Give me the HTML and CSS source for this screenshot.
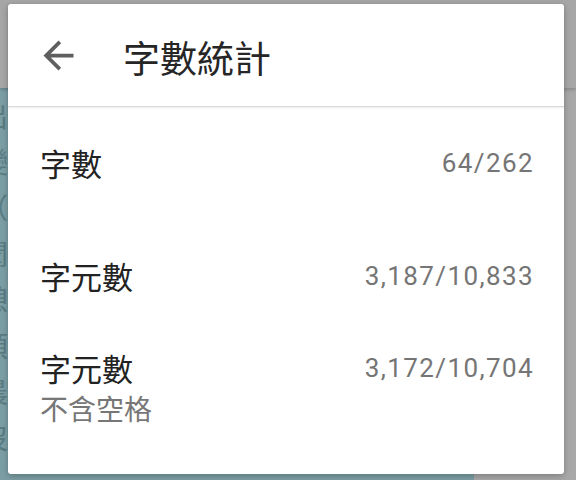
FILE: index.html
```html
<!DOCTYPE html>
<html lang="zh-Hant">
<head>
<meta charset="utf-8">
<link rel="stylesheet" href="styles.css">
</head>
<body>
<div class="app">
  <div class="app-bar"></div>
  <div class="app-body">
    <div class="page">
      <p>出</p>
      <p>變</p>
      <p>（</p>
      <p>聞</p>
      <p>憩</p>
      <p>顛</p>
      <p>晨</p>
      <p>沒</p>
    </div>
    <div class="side"></div>
  </div>
</div>

<div class="dialog">
  <div class="dialog-header">
    <svg class="back" viewBox="0 0 24 24" aria-hidden="true"><path d="M20 11H7.83l5.59-5.59L12 4l-8 8 8 8 1.41-1.41L7.83 13H20v-2z"/></svg>
    <h1 class="title">字數統計</h1>
  </div>
  <div class="rows">
    <div class="row">
      <div class="label">字數</div>
      <div class="value">64/262</div>
    </div>
    <div class="row row-2">
      <div class="label">字元數</div>
      <div class="value">3,187/10,833</div>
    </div>
    <div class="row row-top">
      <div class="label-group">
        <div class="label">字元數</div>
        <div class="sub">不含空格</div>
      </div>
      <div class="value">3,172/10,704</div>
    </div>
  </div>
</div>
</body>
</html>
```
FILE: styles.css
```css
html, body {
  margin: 0;
  padding: 0;
}
body {
  width: 576px;
  height: 480px;
  overflow: hidden;
  position: relative;
  background: #a7a7a7;
  font-family: "Noto Sans CJK TC", "Noto Sans", sans-serif;
}

.app {
  display: flex;
  flex-direction: column;
  height: 480px;
}
.app-bar {
  height: 88px;
  background: #a6a6a6;
  box-shadow: 0 2px 3px rgba(0, 0, 0, 0.18);
  position: relative;
  z-index: 1;
}
.app-body {
  flex: 1;
  display: flex;
}
.page {
  width: 474px;
  background: #7b9ea4;
  color: #5a7c83;
  font-size: 28px;
  line-height: 46px;
  padding-top: 4px;
  padding-left: 0;
  box-sizing: border-box;
  overflow: hidden;
}
.page p {
  margin: 0 0 0 -20px;
}
.side {
  flex: 1;
  background: #a8a8a8;
}

.dialog {
  position: absolute;
  z-index: 5;
  left: 8px;
  top: 4px;
  width: 556px;
  height: 470px;
  background: #ffffff;
  border-radius: 3px;
  box-shadow: 0 2px 6px rgba(0, 0, 0, 0.25);
  display: flex;
  flex-direction: column;
}
.dialog-header {
  height: 102px;
  border-bottom: 1px solid #d9d9d9;
  box-shadow: 0 1px 2px rgba(0, 0, 0, 0.08);
  display: flex;
  align-items: center;
  padding-left: 28px;
}
.back {
  width: 45px;
  height: 45px;
  fill: #5f5f5f;
  flex: none;
}
.title {
  margin: 0 0 0 42px;
  padding-top: 4px;
  font-size: 37px;
  font-weight: 400;
  line-height: 44px;
  color: #262626;
}

.rows {
  display: flex;
  flex-direction: column;
}
.row {
  height: 112px;
  display: flex;
  align-items: center;
  justify-content: space-between;
  padding: 0 30px 0 32px;
}
.row-2 {
  height: 113px;
}
.row-top {
  align-items: flex-start;
  padding-top: 19px;
  height: auto;
}
.label {
  font-size: 31px;
  line-height: 34px;
  color: #222222;
}
.sub {
  margin-top: 8px;
  font-size: 28px;
  line-height: 31px;
  color: #777777;
}
.value {
  font-family: Roboto, "Noto Sans", sans-serif;
  font-size: 26px;
  line-height: 34px;
  letter-spacing: 1.4px;
  color: #757575;
}
```
